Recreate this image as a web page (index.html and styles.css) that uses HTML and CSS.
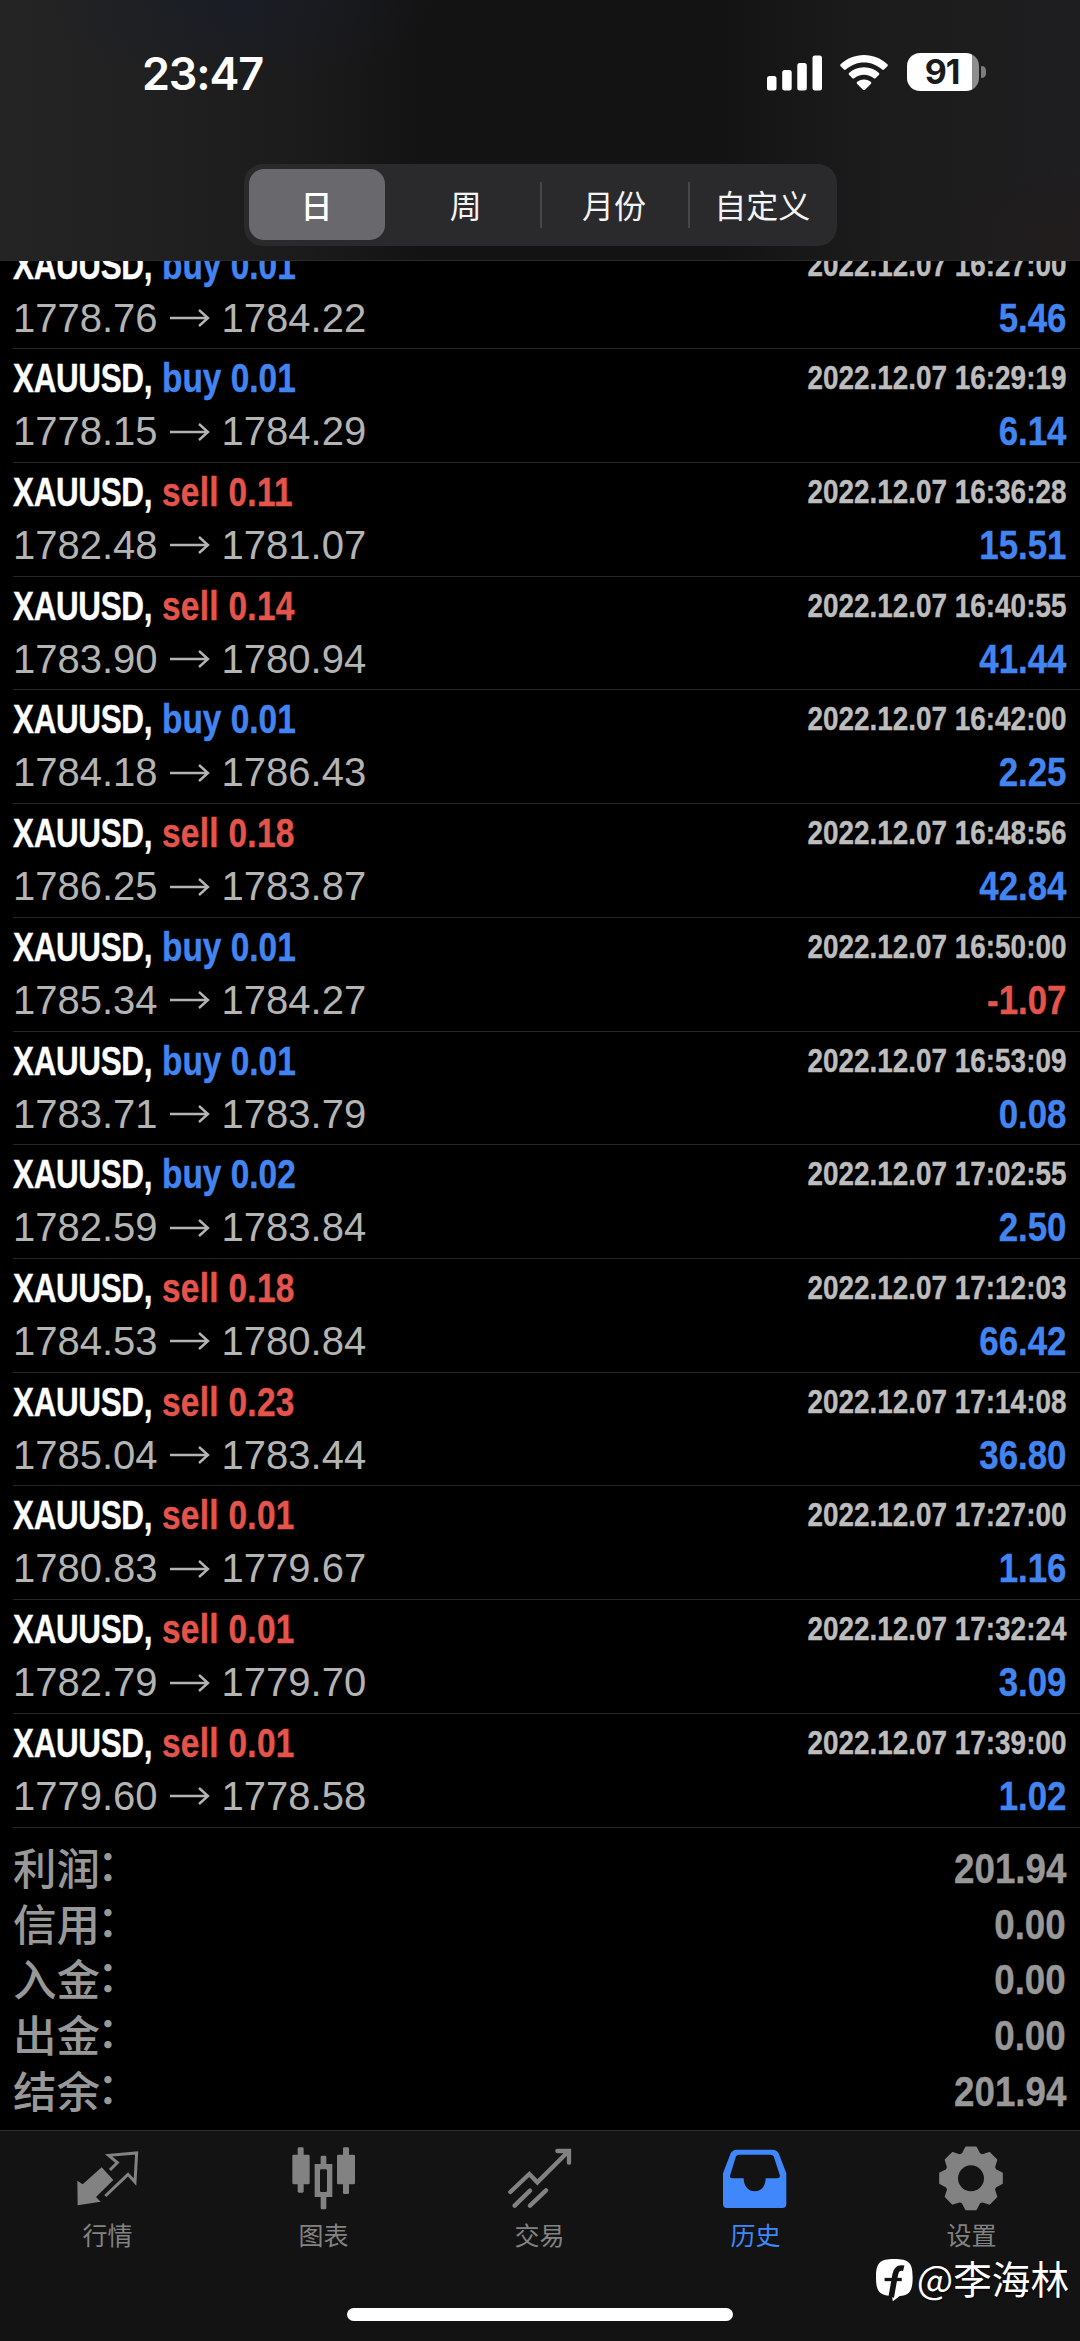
FILE: index.html
```html
<!DOCTYPE html>
<html lang="zh-CN">
<head>
<meta charset="utf-8">
<title>历史</title>
<link rel="stylesheet" href="styles.css">
</head>
<body>
<div class="app">
  <header class="header">
    <div class="status">
      <span class="clock">23:47</span>
      <div class="indicators">
        <svg class="signal" viewBox="0 0 55 36" preserveAspectRatio="none" fill="#fff"><rect x="0" y="21" width="9.500" height="14.500" rx="2.500"/><rect x="15.200" y="15" width="9.500" height="20.500" rx="2.500"/><rect x="30.300" y="8" width="9.500" height="27.500" rx="2.500"/><rect x="45.500" y="0.500" width="9.500" height="35" rx="2.500"/></svg>
        <svg class="wifi" viewBox="0 0 48 37" preserveAspectRatio="none" fill="#fff"><path d="M24 0C33 0 41.500 3.600 47.400 9.600Q48.300 10.600 47.400 11.500L44 15Q43.200 15.800 42.200 15C37.200 10.300 31 7.600 24 7.600S10.800 10.300 5.800 15Q4.800 15.800 4 15L.6 11.500Q-.3 10.600.6 9.600C6.500 3.600 15 0 24 0Z"/><path d="M24 12.600C30 12.600 35 14.800 39 18.500Q39.900 19.500 39 20.400L35.600 23.800Q34.700 24.500 33.800 23.800C31 21.500 27.800 20.200 24 20.200S17 21.500 14.200 23.800Q13.300 24.500 12.400 23.800L9 20.400Q8.100 19.500 9 18.500C13 14.800 18 12.600 24 12.600Z"/><path d="M24 25.200C27 25.200 29 26.200 31 27.800Q31.800 28.600 31 29.500L25 35.600Q24 36.500 23 35.600L17 29.500Q16.200 28.600 17 27.800C19 26.200 21 25.200 24 25.200Z"/></svg>
        <div class="battery"><span class="battery-cell">91</span><span class="battery-tip"></span></div>
      </div>
    </div>
    <nav class="segments">
      <span class="segment selected"><b>日</b></span>
      <span class="segment">周</span>
      <span class="segment divided">月份</span>
      <span class="segment divided">自定义</span>
    </nav>
  </header>

  <main class="content">
    <ul class="deals" id="deals"></ul>
    <dl class="summary">
      <div class="total"><dt>利润<i>：</i></dt><dd>201.94</dd></div>
      <div class="total"><dt>信用<i>：</i></dt><dd>0.00</dd></div>
      <div class="total"><dt>入金<i>：</i></dt><dd>0.00</dd></div>
      <div class="total"><dt>出金<i>：</i></dt><dd>0.00</dd></div>
      <div class="total"><dt>结余<i>：</i></dt><dd>201.94</dd></div>
    </dl>
  </main>

  <footer class="tabbar">
    <nav class="tabs">
      <a class="tab"><svg class="icon" viewBox="0 0 192 192"><path fill="currentColor" d="M4 104 20 115 77 64 112 102 60 153 74 167 5 178Z"/><path fill="none" stroke="currentColor" stroke-width="9" d="M102 72 124 50 98 28 182 21 177 108 156 85 88 150"/></svg><span>行情</span></a>
      <a class="tab"><svg class="icon" viewBox="0 0 192 192" fill="currentColor"><rect x="1" y="26" width="52" height="89" rx="4"/><rect x="17" y="4" width="18" height="136" rx="4"/><rect x="135" y="26" width="54" height="89" rx="4"/><rect x="153" y="4" width="18" height="140" rx="4"/><rect x="86" y="29" width="17" height="30" rx="4"/><rect x="86" y="145" width="17" height="45" rx="4"/><path fill-rule="evenodd" d="M68 54H121V153H68ZM88 70Q84 70 84 74V134Q84 138 88 138H101Q105 138 105 134V74Q105 70 101 70Z"/></svg><span>图表</span></a>
      <a class="tab"><svg class="icon" viewBox="0 0 192 192" fill="none" stroke="currentColor" stroke-width="13" stroke-linecap="round"><path d="M7 138 64 84 88 109 180 17M148 15H183V50M20 179 66 134M66 179 114 133"/></svg><span>交易</span></a>
      <a class="tab active"><svg class="icon" viewBox="0 0 192 192"><path fill="currentColor" fill-rule="evenodd" d="M-3 82 20 22Q26 11 38 11H146Q158 11 164 22L187 82V174Q187 186 175 186H9Q-3 186-3 174ZM36 31 18 89Q17 96 24 97H59C59 122 74 136 92 136S125 122 125 97H161Q168 96 168 89L149 31Q146 26 140 26H45Q38 26 36 31Z"/></svg><span>历史</span></a>
      <a class="tab"><svg class="icon" viewBox="0 0 192 192"><g transform="translate(93 97)" fill="currentColor" stroke="currentColor" stroke-width="5" stroke-linejoin="round"><circle r="77"/><path id="tooth" d="M-26-72-15-93H15L26-72V72L15 93H-15L-26 72Z"/><use href="#tooth" transform="rotate(45)"/><use href="#tooth" transform="rotate(90)"/><use href="#tooth" transform="rotate(135)"/><circle r="39" fill="#131313" stroke="none"/></g></svg><span>设置</span></a>
    </nav>
    <div class="home-indicator"></div>
    <div class="watermark"><svg class="mark" viewBox="0 0 112 130"><path fill="#fff" d="M55 0C100 0 111 11 111 55S100 110 72 112L51 128 48 112C10 110 0 98 0 55S11 0 55 0Z"/><path fill="none" stroke="#131313" stroke-width="17" d="M84 28C68 24 61 32 58 48L46 116"/><path stroke="#131313" stroke-width="10" d="M26 62H78"/></svg><span>@李海林</span></div>
  </footer>
</div>
<script src="deals.js"></script>
</body>
</html>
```
FILE: styles.css
```css
* { box-sizing: border-box; margin: 0; padding: 0; }
body { background: #000; font-family: "Liberation Sans", "Noto Sans CJK SC", sans-serif; }
.app { display: flex; flex-direction: column; width: 1080px; height: 2341px; overflow: hidden; }

.header {
  display: flex; flex-direction: column; align-items: center;
  height: 261px; border-bottom: 1px solid #2a2a2b;
  background:
    radial-gradient(ellipse 200px 90px at 240px 0, rgba(20, 28, 44, .5), transparent),
    radial-gradient(ellipse 160px 80px at 1080px 240px, rgba(38, 26, 24, .4), transparent),
    linear-gradient(90deg, #242424 0, #202020 160px, #1c1b1b 300px, #131313 420px, #131313 720px, #1b1b1b 860px, #1e1e20 1080px);
}
.status { display: flex; justify-content: space-between; width: 100%; height: 164px; padding: 44px 94px 0 142px; }
.clock { font: 600 45px/60px Inter, sans-serif; color: #fff; letter-spacing: -1.200px; }
.indicators { display: flex; height: 38px; margin-top: 9px; }
.signal { width: 55px; height: 36px; margin-top: 1.500px; }
.wifi { width: 48px; height: 36px; margin: 1.500px 19px 0 18.500px; }
.battery { display: flex; align-items: center; gap: 2px; }
.battery-cell {
  width: 72px; height: 38px; border-radius: 13px; padding-right: 2px;
  background: linear-gradient(90deg, #fff 65px, #8e8e8e 65px);
  font: 700 34px/38px Inter, sans-serif; color: #1a1a1a; text-align: center; letter-spacing: -1px;
}
.battery-tip { width: 5px; height: 12px; border-radius: 1px 6px 6px 1px; background: #7c7c7c; }

.segments {
  display: grid; grid-template-columns: repeat(4, 1fr);
  width: 593px; height: 82px; border-radius: 19px; background: #2a2a2d;
  font-family: "Noto Sans CJK SC", sans-serif; font-size: 32px; line-height: 80px; color: #f4f4f4; text-align: center;
}
.segment.selected { padding: 5px 7px 5px 5px; }
.segment b { display: block; height: 71px; line-height: 70px; border-radius: 15px; background: #69686c; font-weight: 500; color: #fff; }
.segment.divided { background: linear-gradient(#47474a, #47474a) left center / 2px 46px no-repeat; }

.content { flex: none; height: 1869px; overflow: hidden; }
.deals { list-style: none; margin-top: -25.500px; }
.deal {
  display: grid; grid-template-columns: 1fr auto; grid-template-rows: 59px 54.730px;
  height: 113.730px; margin-left: 13px; padding-right: 14px; border-bottom: 1.500px solid #262626;
}
.name, .time, .profit { font-weight: 700; white-space: nowrap; -webkit-text-stroke: .4px currentColor; }
.name { display: flex; font-size: 40.500px; line-height: 59px; color: #fff; }
.symbol { width: 148.500px; letter-spacing: -.4px; transform: scaleX(.775); transform-origin: left; }
.symbol + span { transform: scaleX(.825); transform-origin: left; }
.time { transform: scaleX(.845); transform-origin: right; font-size: 33px; line-height: 57.500px; color: #bdbdbd; text-align: right; }
.prices { display: flex; align-items: center; font-size: 40px; line-height: 47px; height: 47px; color: #b4b4b4; }
.arrow { width: 40px; height: 18px; margin: 0 12px 0 12px; }
.profit { transform: scaleX(.86); transform-origin: right; font-size: 40.500px; line-height: 47px; text-align: right; }
.buy, .gain { color: #4385f0; }
.sell, .loss { color: #e4544b; }
.sell { letter-spacing: .350px; }

.summary { padding: 11.500px 14px 0 13px; }
.total { display: flex; justify-content: space-between; height: 55.700px; line-height: 55px; color: #989898; }
.total dt { height: 55px; font-family: "Noto Sans CJK SC", sans-serif; font-weight: 500; font-size: 43.500px; }
.total i { display: inline-block; font-style: normal; line-height: 1; margin-left: -3px; vertical-align: 4px; }
.total dd { padding-top: 2px; font-weight: 700; font-size: 42px; -webkit-text-stroke: .4px currentColor; transform: scaleX(.875); transform-origin: right; }

.tabbar { position: relative; flex: 1; display: flex; flex-direction: column; align-items: center; background: #131313; border-top: 1.500px solid #2f2f2f; }
.tabs { display: grid; grid-template-columns: repeat(5, 216px); height: 177px; padding-top: 15px; }
.tab { display: flex; flex-direction: column; align-items: center; color: #828282; font: 400 25px/36px "Noto Sans CJK SC", sans-serif; }
.tab span { margin: 5.500px 1px 0 0; }
.tab.active { color: #3f87fb; }
.icon { width: 64px; height: 64px; overflow: visible; }
.home-indicator { width: 386px; height: 13px; border-radius: 7px; background: #fff; }
.watermark { position: absolute; right: 11px; top: 120px; display: flex; align-items: center; gap: 4px; color: #fff; font: 400 38.600px/52px "Noto Sans CJK SC", sans-serif; text-shadow: 1px 1px 2px #000; }
.mark { width: 37px; height: 43px; margin-top: 6px; }
```
FILE: deals.js
```js
const deals = [
  ["buy", "0.01", "2022.12.07 16:27:00", "1778.76", "1784.22", "5.46"],
  ["buy", "0.01", "2022.12.07 16:29:19", "1778.15", "1784.29", "6.14"],
  ["sell", "0.11", "2022.12.07 16:36:28", "1782.48", "1781.07", "15.51"],
  ["sell", "0.14", "2022.12.07 16:40:55", "1783.90", "1780.94", "41.44"],
  ["buy", "0.01", "2022.12.07 16:42:00", "1784.18", "1786.43", "2.25"],
  ["sell", "0.18", "2022.12.07 16:48:56", "1786.25", "1783.87", "42.84"],
  ["buy", "0.01", "2022.12.07 16:50:00", "1785.34", "1784.27", "-1.07"],
  ["buy", "0.01", "2022.12.07 16:53:09", "1783.71", "1783.79", "0.08"],
  ["buy", "0.02", "2022.12.07 17:02:55", "1782.59", "1783.84", "2.50"],
  ["sell", "0.18", "2022.12.07 17:12:03", "1784.53", "1780.84", "66.42"],
  ["sell", "0.23", "2022.12.07 17:14:08", "1785.04", "1783.44", "36.80"],
  ["sell", "0.01", "2022.12.07 17:27:00", "1780.83", "1779.67", "1.16"],
  ["sell", "0.01", "2022.12.07 17:32:24", "1782.79", "1779.70", "3.09"],
  ["sell", "0.01", "2022.12.07 17:39:00", "1779.60", "1778.58", "1.02"]
];
const arrow = '<svg class="arrow" viewBox="0 0 40 18" fill="none" stroke="currentColor" stroke-width="2.4"><path d="M0 9H38M29 1 38 9 29 17"/></svg>';
document.getElementById("deals").innerHTML = deals.map(([side, lots, time, open, close, profit]) => `
  <li class="deal">
    <span class="name"><span class="symbol">XAUUSD,</span><span class="${side}">${side} ${lots}</span></span>
    <span class="time">${time}</span>
    <span class="prices">${open}${arrow}${close}</span>
    <span class="profit ${profit < 0 ? "loss" : "gain"}">${profit}</span>
  </li>`).join("");
```
